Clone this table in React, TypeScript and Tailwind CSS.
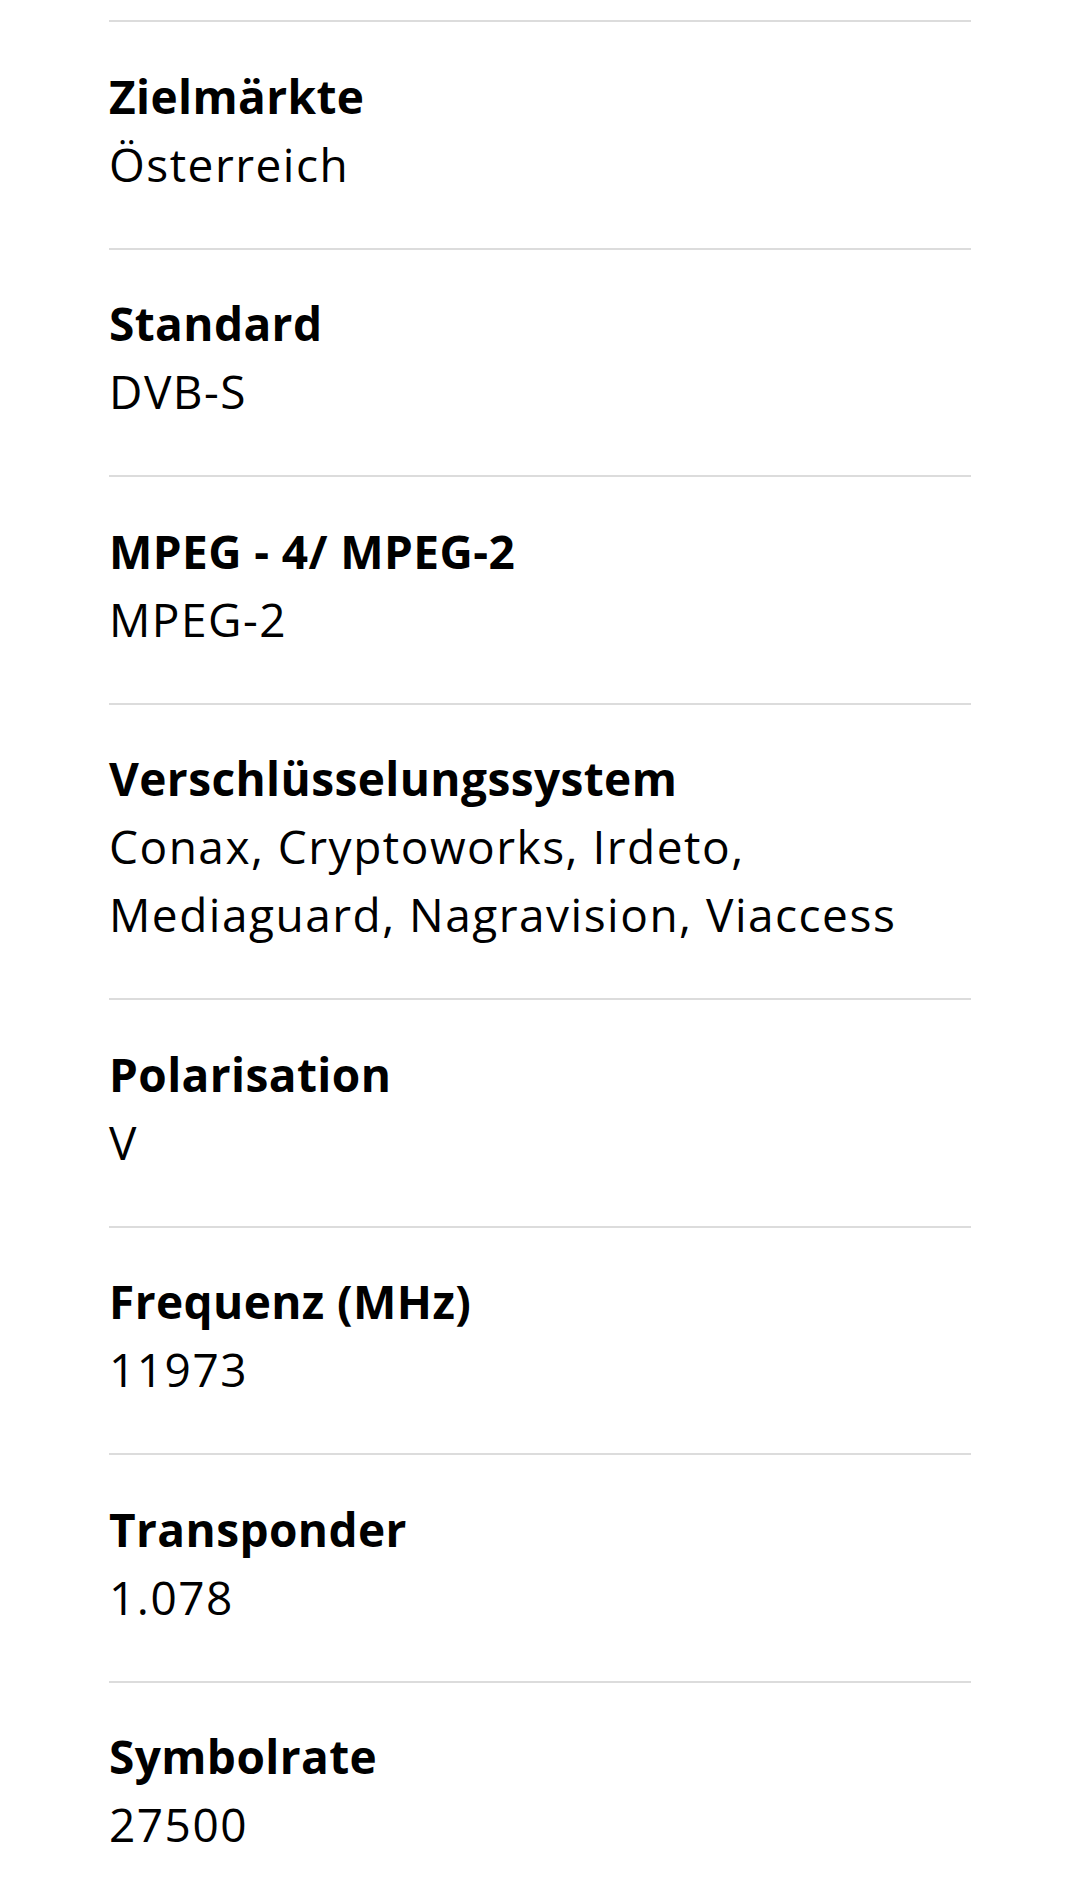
import React from 'react';

interface SpecRow {
  label: string;
  value: string;
}

const rows: SpecRow[] = [
  { label: 'Zielmärkte', value: 'Österreich' },
  { label: 'Standard', value: 'DVB-S' },
  { label: 'MPEG - 4/ MPEG-2', value: 'MPEG-2' },
  { label: 'Verschlüsselungssystem', value: 'Conax, Cryptoworks, Irdeto, Mediaguard, Nagravision, Viaccess' },
  { label: 'Polarisation', value: 'V' },
  { label: 'Frequenz (MHz)', value: '11973' },
  { label: 'Transponder', value: '1.078' },
  { label: 'Symbolrate', value: '27500' },
];

export default function App() {
  return (
    <div className="bg-white min-h-screen pt-[20px] font-['Open_Sans',sans-serif] text-black">
      <dl className="mx-[109px]">
        {rows.map(row => (
          <div key={row.label} className="border-t-2 border-[#dcdcdc] pt-[39.5px] pb-[50px]">
            <dt className="text-[46px] leading-[68px] font-bold tracking-[0.4px]">{row.label}</dt>
            <dd className="text-[46px] leading-[68px] font-normal tracking-[1.5px] max-w-[800px]">{row.value}</dd>
          </div>
        ))}
      </dl>
    </div>
  );
}
